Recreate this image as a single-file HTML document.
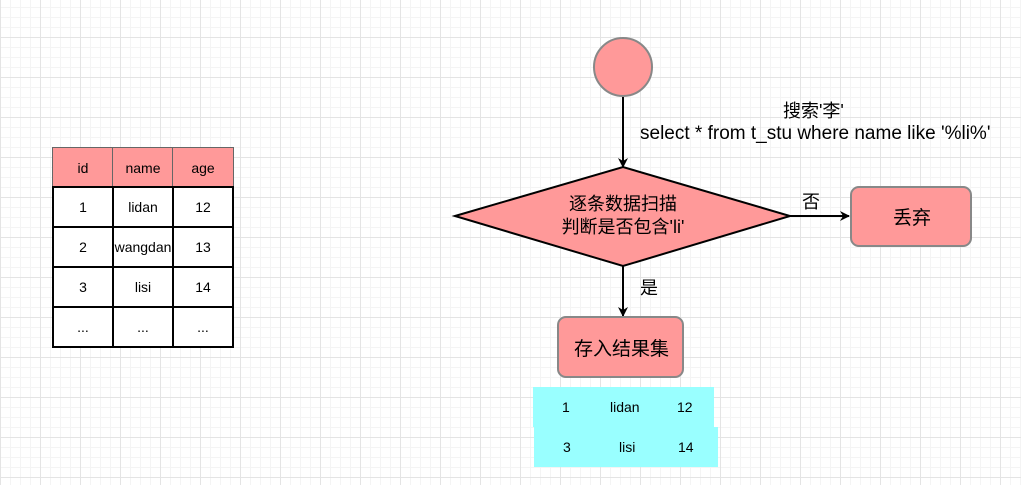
<!DOCTYPE html>
<html><head><meta charset="utf-8"><style>
body{margin:0;width:1021px;height:485px;overflow:hidden;position:relative;font-family:"Liberation Sans","Noto Sans CJK SC",sans-serif;
background-color:#fff;
background-image:linear-gradient(#e4e4e4 1px,transparent 1px),linear-gradient(90deg,#e4e4e4 1px,transparent 1px),linear-gradient(#f4f4f4 1px,transparent 1px),linear-gradient(90deg,#f4f4f4 1px,transparent 1px);
background-size:40px 40px,40px 40px,10px 10px,10px 10px;background-position:0 37px,0 0,0 -3px,0 0;}
.t{position:absolute;left:52px;top:147px;width:181px;height:200px;font-size:14px;}
.c{position:absolute;box-sizing:border-box;border:2px solid #000;background:#fff;display:flex;align-items:center;justify-content:center;width:62px;height:42px}
.h{background:#ff9999;border:1px solid #666;border-bottom:2px solid #000}
.abs{position:absolute}
</style></head><body>
<div class="t">
<div class="c h" style="left:0;top:0">id</div><div class="c h" style="left:60px;top:0">name</div><div class="c h" style="left:120px;top:0">age</div>
<div class="c" style="left:0;top:39px">1</div><div class="c" style="left:60px;top:39px">lidan</div><div class="c" style="left:120px;top:39px">12</div>
<div class="c" style="left:0;top:79px">2</div><div class="c" style="left:60px;top:79px">wangdan</div><div class="c" style="left:120px;top:79px">13</div>
<div class="c" style="left:0;top:119px">3</div><div class="c" style="left:60px;top:119px">lisi</div><div class="c" style="left:120px;top:119px">14</div>
<div class="c" style="left:0;top:159px">...</div><div class="c" style="left:60px;top:159px">...</div><div class="c" style="left:120px;top:159px">...</div>
</div>
<svg class="abs" style="left:0;top:0" width="1021" height="485">
<defs><marker id="a" markerWidth="10" markerHeight="10" refX="9" refY="5" orient="auto" markerUnits="userSpaceOnUse"><path d="M0,0 L10,5 L0,10 L3,5z" fill="#000"/></marker></defs>
<circle cx="623" cy="67" r="29" fill="#ff9999" stroke="#888" stroke-width="2"/>
<line x1="623" y1="97" x2="623" y2="167" stroke="#000" stroke-width="2" marker-end="url(#a)"/>
<polygon points="455,216 623,167 790,216 623,266" fill="#ff9999" stroke="#000" stroke-width="2"/>
<line x1="790" y1="216" x2="849" y2="216" stroke="#000" stroke-width="2" marker-end="url(#a)"/>
<line x1="623" y1="266" x2="623" y2="316" stroke="#000" stroke-width="2" marker-end="url(#a)"/>
<rect x="851" y="187" width="120" height="59" rx="8" fill="#ff9999" stroke="#888" stroke-width="2"/>
<rect x="558" y="317" width="125" height="60" rx="8" fill="#ff9999" stroke="#888" stroke-width="2"/>
<rect x="533" y="387" width="181" height="40" fill="#99ffff"/>
<rect x="534" y="427" width="184" height="40" fill="#99ffff"/>
</svg>
<div class="abs" style="left:783px;top:97px;font-size:18px">搜索'李'</div>
<div class="abs" style="left:640px;top:123px;font-size:19px;white-space:nowrap">select * from t_stu where name like '%li%'</div>
<div class="abs" style="left:503px;top:193px;width:240px;text-align:center;font-size:18px;line-height:23px">逐条数据扫描<br>判断是否包含'li'</div>
<div class="abs" style="left:802px;top:188px;font-size:18px">否</div>
<div class="abs" style="left:640px;top:274px;font-size:18px">是</div>
<div class="abs" style="left:851px;top:203px;width:122px;text-align:center;font-size:19px">丢弃</div>
<div class="abs" style="left:558px;top:334px;width:127px;text-align:center;font-size:19px">存入结果集</div>
<div class="abs" style="left:562px;top:399px;font-size:14px">1</div>
<div class="abs" style="left:610px;top:399px;font-size:14px">lidan</div>
<div class="abs" style="left:677px;top:399px;font-size:14px">12</div>
<div class="abs" style="left:563px;top:439px;font-size:14px">3</div>
<div class="abs" style="left:619px;top:439px;font-size:14px">lisi</div>
<div class="abs" style="left:678px;top:439px;font-size:14px">14</div>
</body></html>
